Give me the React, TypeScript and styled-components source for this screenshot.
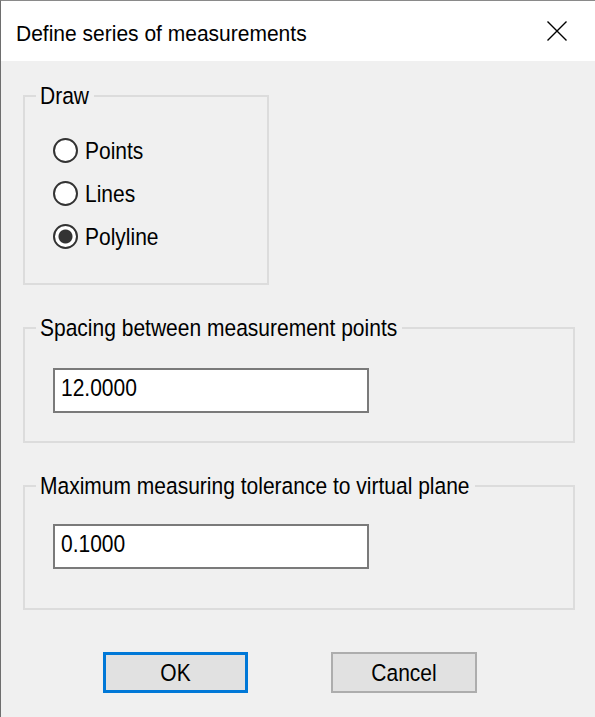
import React from "react";
import styled, { createGlobalStyle } from "styled-components";

const GlobalStyle = createGlobalStyle`
  html, body {
    margin: 0;
    padding: 0;
    background: #f0f0f0;
  }
  body {
    width: 595px;
    height: 717px;
    overflow: hidden;
  }
`;

const dialogFont = `"Liberation Sans", Arial, sans-serif`;
const STRETCH = 1.18;

const Window = styled.div`
  box-sizing: border-box;
  width: 598px;
  height: 717px;
  background: #f0f0f0;
  border-left: 1px solid #6e6e6e;
  border-top: 1px solid #8a8a8a;
`;

const TitleBar = styled.div`
  box-sizing: border-box;
  height: 60px;
  background: #ffffff;
  display: flex;
  align-items: center;
  justify-content: space-between;
  padding: 4px 0 0 15px;
`;

const Title = styled.span`
  display: inline-block;
  font-family: "Liberation Sans", Arial, sans-serif;
  font-size: 21px;
  color: #000;
  transform: scaleY(1.08);
  transform-origin: center;
`;

const CloseButton = styled.button`
  width: 46px;
  height: 40px;
  margin: -4px 18px 0 0;
  padding: 0;
  border: none;
  background: transparent;
  display: flex;
  align-items: center;
  justify-content: center;
`;

const Content = styled.div`
  padding: 20px 0 0 22px;
`;

/* Dialog text: the original dialog font is tall and narrow */
const Tall = styled.span`
  display: inline-block;
  transform: scaleY(${STRETCH});
  transform-origin: center;
`;

const Group = styled.fieldset<{ $width: number; $top: number }>`
  box-sizing: border-box;
  width: ${(p) => p.$width}px;
  min-width: 0;
  margin: ${(p) => p.$top}px 0 0 0;
  padding: 0;
  border: 2px solid #dcdcdc;
`;

const Legend = styled.legend`
  margin-left: 11px;
  padding: 0 5px 0 4px;
  font-family: ${dialogFont};
  font-size: 21px;
  line-height: 30px;
  white-space: nowrap;
  color: #000;
`;

const RadioList = styled.div`
  display: flex;
  flex-direction: column;
  padding: 18px 0 25px 28px;
`;

const RadioRow = styled.label`
  display: flex;
  align-items: center;
  height: 43px;
  font-family: ${dialogFont};
  font-size: 21px;
  color: #000;
`;

const RadioInput = styled.input`
  appearance: none;
  box-sizing: border-box;
  width: 25px;
  height: 25px;
  margin: 0 7px 0 0;
  border-radius: 50%;
  border: 2px solid #333333;
  background: #ffffff;
  &:checked {
    background: radial-gradient(circle, #333333 0 6.5px, #ffffff 7.5px);
  }
`;

const FieldBody = styled.div<{ $top: number; $bottom: number }>`
  padding: ${(p) => p.$top}px 0 ${(p) => p.$bottom}px 28px;
`;

const TextBoxFrame = styled.div`
  box-sizing: border-box;
  width: 316px;
  height: 45px;
  border: 2px solid #7a7a7a;
  background: #ffffff;
  overflow: hidden;
`;

const TextBox = styled.input`
  box-sizing: border-box;
  display: block;
  width: 100%;
  height: ${41 / STRETCH}px;
  margin: 0;
  padding: 0 0 5.4px 6px;
  border: none;
  background: #ffffff;
  font-family: ${dialogFont};
  font-size: 21px;
  color: #000;
  outline: none;
  transform: scaleY(${STRETCH});
  transform-origin: top left;
`;

const ButtonRow = styled.div`
  display: flex;
  gap: 83px;
  margin-top: 42px;
  padding-left: 80px;
`;

const DialogButton = styled.button<{ $default?: boolean }>`
  box-sizing: border-box;
  width: ${(p) => (p.$default ? 145 : 146)}px;
  height: 41px;
  margin: 0;
  padding: 0;
  background: #e1e1e1;
  border: ${(p) => (p.$default ? "3px solid #0078d7" : "2px solid #adadad")};
  font-family: ${dialogFont};
  font-size: 21px;
  color: #000;
`;

const options = ["Points", "Lines", "Polyline"];

export default function App() {
  return (
    <>
      <GlobalStyle />
      <Window>
        <TitleBar>
          <Title>Define series of measurements</Title>
          <CloseButton aria-label="Close">
            <svg width="20" height="20" viewBox="0 0 20 20">
              <path d="M0.5 0.5 L19.5 19.5 M19.5 0.5 L0.5 19.5" stroke="#000" strokeWidth="1.4" fill="none" />
            </svg>
          </CloseButton>
        </TitleBar>
        <Content>
          <Group $width={246} $top={0}>
            <Legend>
              <Tall>Draw</Tall>
            </Legend>
            <RadioList>
              {options.map((o) => (
                <RadioRow key={o}>
                  <RadioInput type="radio" name="draw" defaultChecked={o === "Polyline"} />
                  <Tall>{o}</Tall>
                </RadioRow>
              ))}
            </RadioList>
          </Group>
          <Group $width={552} $top={28}>
            <Legend>
              <Tall>Spacing between measurement points</Tall>
            </Legend>
            <FieldBody $top={25} $bottom={28}>
              <TextBoxFrame>
                <TextBox defaultValue="12.0000" />
              </TextBoxFrame>
            </FieldBody>
          </Group>
          <Group $width={552} $top={28}>
            <Legend>
              <Tall>Maximum measuring tolerance to virtual plane</Tall>
            </Legend>
            <FieldBody $top={23} $bottom={39}>
              <TextBoxFrame>
                <TextBox defaultValue="0.1000" />
              </TextBoxFrame>
            </FieldBody>
          </Group>
          <ButtonRow>
            <DialogButton $default>
              <Tall>OK</Tall>
            </DialogButton>
            <DialogButton>
              <Tall>Cancel</Tall>
            </DialogButton>
          </ButtonRow>
        </Content>
      </Window>
    </>
  );
}
